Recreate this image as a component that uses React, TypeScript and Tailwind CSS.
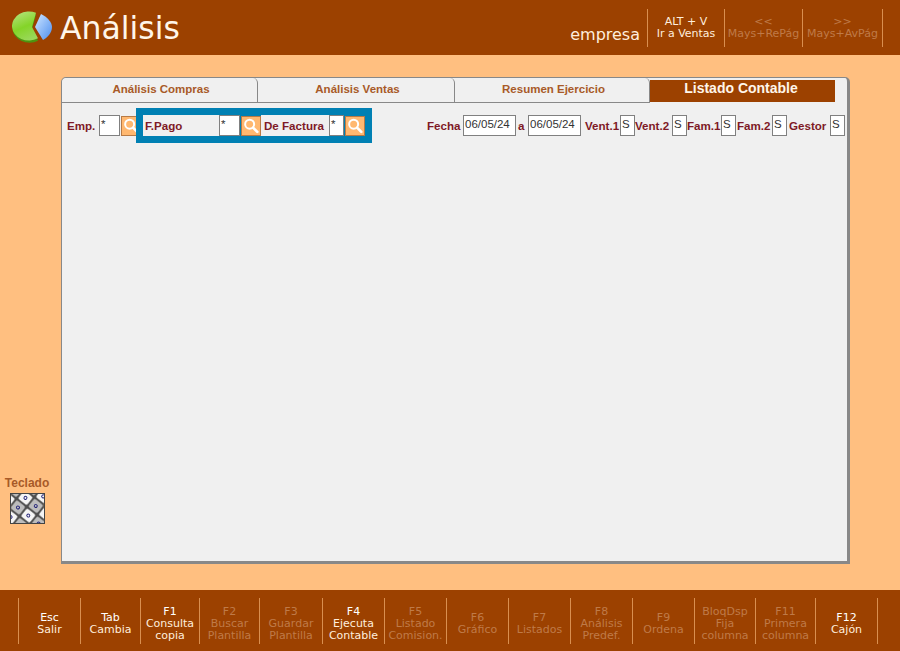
import { ReactNode } from "react";

const keys = [
  { w: "w-[62px]", top: "Esc", lines: ["Salir"], on: true },
  { w: "w-[60px]", top: "Tab", lines: ["Cambia"], on: true },
  { w: "w-[59px]", top: "F1", lines: ["Consulta", "copia"], on: true },
  { w: "w-[60px]", top: "F2", lines: ["Buscar", "Plantilla"], on: false },
  { w: "w-[63px]", top: "F3", lines: ["Guardar", "Plantilla"], on: false },
  { w: "w-[62px]", top: "F4", lines: ["Ejecuta", "Contable"], on: true },
  { w: "w-[62px]", top: "F5", lines: ["Listado", "Comision."], on: false },
  { w: "w-[62px]", top: "F6", lines: ["Gráfico"], on: false },
  { w: "w-[62px]", top: "F7", lines: ["Listados"], on: false },
  { w: "w-[62px]", top: "F8", lines: ["Análisis", "Predef."], on: false },
  { w: "w-[62px]", top: "F9", lines: ["Ordena"], on: false },
  { w: "w-[61px]", top: "BloqDsp", lines: ["Fija", "columna"], on: false },
  { w: "w-[60px]", top: "F11", lines: ["Primera", "columna"], on: false },
  { w: "w-[62px]", top: "F12", lines: ["Cajón"], on: true },
];

function Logo() {
  return (
    <svg width="42" height="36" viewBox="0 0 42 36" className="shrink-0">
      <defs>
        <linearGradient id="green" x1="0.2" y1="0" x2="0.6" y2="1">
          <stop offset="0" stopColor="#b4e27c" />
          <stop offset="0.55" stopColor="#84d428" />
          <stop offset="1" stopColor="#9ad85a" />
        </linearGradient>
        <linearGradient id="blue" x1="0" y1="0" x2="1" y2="1">
          <stop offset="0" stopColor="#cfe6ff" />
          <stop offset="1" stopColor="#4d8ff0" />
        </linearGradient>
      </defs>
      <path d="M24 4.8 A17 14.5 0 1 0 26 30.8 L20 19 Z" fill="#4d9410" />
      <path d="M24 2.8 A17 14.5 0 1 0 26 28.3 L20 17 Z" fill="url(#green)" />
      <path d="M29 4 C35 7 40 12 40 17 C40 23 35 28 31 30 L23 17 Z" fill="url(#blue)" />
    </svg>
  );
}

function Lens() {
  return (
    <svg width="20" height="20" viewBox="0 0 20 20" className="shrink-0 bg-[#ffb870] border border-[#b87a45]">
      <circle cx="8.5" cy="8" r="5" fill="none" stroke="#fff" strokeWidth="2.2" />
      <path d="M12.3 11.8 L17 16.5" stroke="#fff" strokeWidth="3" strokeLinecap="round" />
    </svg>
  );
}

function Keyboard() {
  const cells: number[][] = [];
  for (let r = -1; r < 3; r++) {
    for (let c = -1; c < 3; c++) cells.push([c, r]);
  }
  return (
    <svg width="35" height="31" viewBox="0 0 35 31" className="border border-[#444]">
      <rect width="35" height="31" fill="#4f4f4f" />
      <g transform="rotate(38 17 15) translate(3 2)">
        {cells.map(([c, r], i) => {
          const x = c * 14;
          const y = r * 13;
          return (
            <g key={i}>
              <rect x={x} y={y} width="12" height="11" rx="2" fill={(c + r) % 2 ? "#bdbdbd" : "#f5f5f5"} stroke="#8a8a8a" strokeWidth="0.6" />
              <circle cx={x + 6} cy={y + 5.5} r="1.6" fill="none" stroke="#25257a" strokeWidth="1" />
            </g>
          );
        })}
      </g>
    </svg>
  );
}

function Label({ className, children }: { className: string; children: ReactNode }) {
  return <span className={`shrink-0 text-[11.6px] font-bold text-[#7f1a26] whitespace-nowrap ${className}`}>{children}</span>;
}

function Field({ className, children }: { className: string; children: ReactNode }) {
  return (
    <span className={`shrink-0 h-[21px] bg-white border border-[#808080] text-[11.5px] leading-[16px] pl-[1px] text-[#333] ${className}`}>
      {children}
    </span>
  );
}

function Tab({ className, children }: { className: string; children: ReactNode }) {
  return (
    <div className={`h-[25px] shrink-0 bg-[#f0f0f0] border-r border-b border-[#888] rounded-t-[5px] flex items-center justify-center pl-[3px] text-[11.5px] font-bold text-[#a85a28] ${className}`}>
      {children}
    </div>
  );
}

export default function App() {
  return (
    <div className="w-[900px] h-[651px] overflow-hidden flex flex-col bg-[#ffbf80] font-['Liberation_Sans',Arial,sans-serif]">
      {/* Header */}
      <header className="h-[55px] shrink-0 bg-[#9c4100] flex items-center font-['DejaVu_Sans',sans-serif]">
        <div className="ml-[12px] mt-[1px]">
          <Logo />
        </div>
        <h1 className="ml-[6px] mt-[2px] text-[31.5px] leading-none text-[#fff6ea] font-normal">Análisis</h1>
        <span className="ml-auto mt-[15px] mr-[7px] text-[16px] leading-5 text-[#ffeedd]">empresa</span>
        <div className="flex h-[38px] mr-[17px] border-r border-[#d98f50] text-[11px] leading-[12px] text-center">
          <div className="w-[77px] border-l border-[#d98f50] flex flex-col justify-center text-[#ffeedd]">
            <span>ALT + V</span>
            <span>Ir a Ventas</span>
          </div>
          <div className="w-[78px] border-l border-[#d98f50] flex flex-col justify-center text-[#bf7a48]">
            <span>&lt;&lt;</span>
            <span>Mays+RePág</span>
          </div>
          <div className="w-[80px] border-l border-[#d98f50] flex flex-col justify-center text-[#bf7a48]">
            <span>&gt;&gt;</span>
            <span>Mays+AvPág</span>
          </div>
        </div>
      </header>

      {/* Body */}
      <main className="flex-1 flex pt-[22px] pb-[26px]">
        <div className="w-[61px] shrink-0 flex flex-col items-center justify-end pb-[40px] pr-[7px]">
          <span className="text-[12px] font-bold leading-[14px] text-[#a85a28] mb-[3px]">Teclado</span>
          <Keyboard />
        </div>

        <section className="w-[789px] h-[487px] flex flex-col bg-[#f0f0f0] rounded-t-[5px] border-r-[3px] border-b-[3px] border-l border-t border-[#888]">
          <div className="flex shrink-0">
            <Tab className="w-[196px]">Análisis Compras</Tab>
            <Tab className="w-[197px]">Análisis Ventas</Tab>
            <Tab className="w-[195px]">Resumen Ejercicio</Tab>
            <div className="w-[185px] h-[22px] mt-[2px] pr-[3px] shrink-0 bg-[#9c4100] text-center text-[14px] font-bold leading-[16px] text-[#fff6ea]">
              Listado Contable
            </div>
          </div>

          <div className="flex items-center h-[35px] mt-[5px] pl-[5px]">
            <Label className="w-[32px]">Emp.</Label>
            <Field className="w-[21px]">*</Field>
            <span className="ml-[1px] w-[15px] overflow-hidden shrink-0">
              <Lens />
            </span>
            <div className="w-[236px] h-[35px] shrink-0 bg-[#0080b3] flex items-center px-[7px]">
              <div className="w-[76px] h-[21px] bg-[#f0f0f0] shrink-0 flex items-center pl-[2px]">
                <Label className="">F.Pago</Label>
              </div>
              <Field className="w-[21px]">*</Field>
              <span className="ml-[1px]"><Lens /></span>
              <div className="w-[68px] h-[21px] bg-[#f0f0f0] shrink-0 flex items-center pl-[3px]">
                <Label className="">De Factura</Label>
              </div>
              <Field className="w-[15px]">*</Field>
              <span className="ml-[1px]"><Lens /></span>
            </div>
            <Label className="ml-[55px] w-[36px]">Fecha</Label>
            <Field className="w-[53px]">06/05/24</Field>
            <Label className="ml-[2px] w-[10px]">a</Label>
            <Field className="w-[53px]">06/05/24</Field>
            <Label className="ml-[4px] w-[35px]">Vent.1</Label>
            <Field className="w-[15px]">S</Field>
            <Label className="w-[37px]">Vent.2</Label>
            <Field className="w-[15px]">S</Field>
            <Label className="w-[34px]">Fam.1</Label>
            <Field className="w-[15px]">S</Field>
            <Label className="ml-[1px] w-[35px]">Fam.2</Label>
            <Field className="w-[15px]">S</Field>
            <Label className="ml-[2px] w-[41px]">Gestor</Label>
            <Field className="w-[15px]">S</Field>
          </div>
        </section>
      </main>

      {/* Function keys */}
      <footer className="h-[61px] shrink-0 bg-[#9c4100] flex items-center pl-[18px] font-['DejaVu_Sans',sans-serif]">
        <div className="flex h-[46px] border-r border-[#d98f50]">
          {keys.map((k) => (
            <div
              key={k.top}
              className={`${k.w} pt-[7px] border-l border-[#d98f50] flex flex-col justify-center text-center text-[11px] leading-[12px] whitespace-nowrap ${k.on ? "text-[#ffeedd]" : "text-[#bf7a48]"}`}
            >
              <span className={k.on ? "text-white" : ""}>{k.top}</span>
              {k.lines.map((l) => (
                <span key={l}>{l}</span>
              ))}
            </div>
          ))}
        </div>
      </footer>
    </div>
  );
}
